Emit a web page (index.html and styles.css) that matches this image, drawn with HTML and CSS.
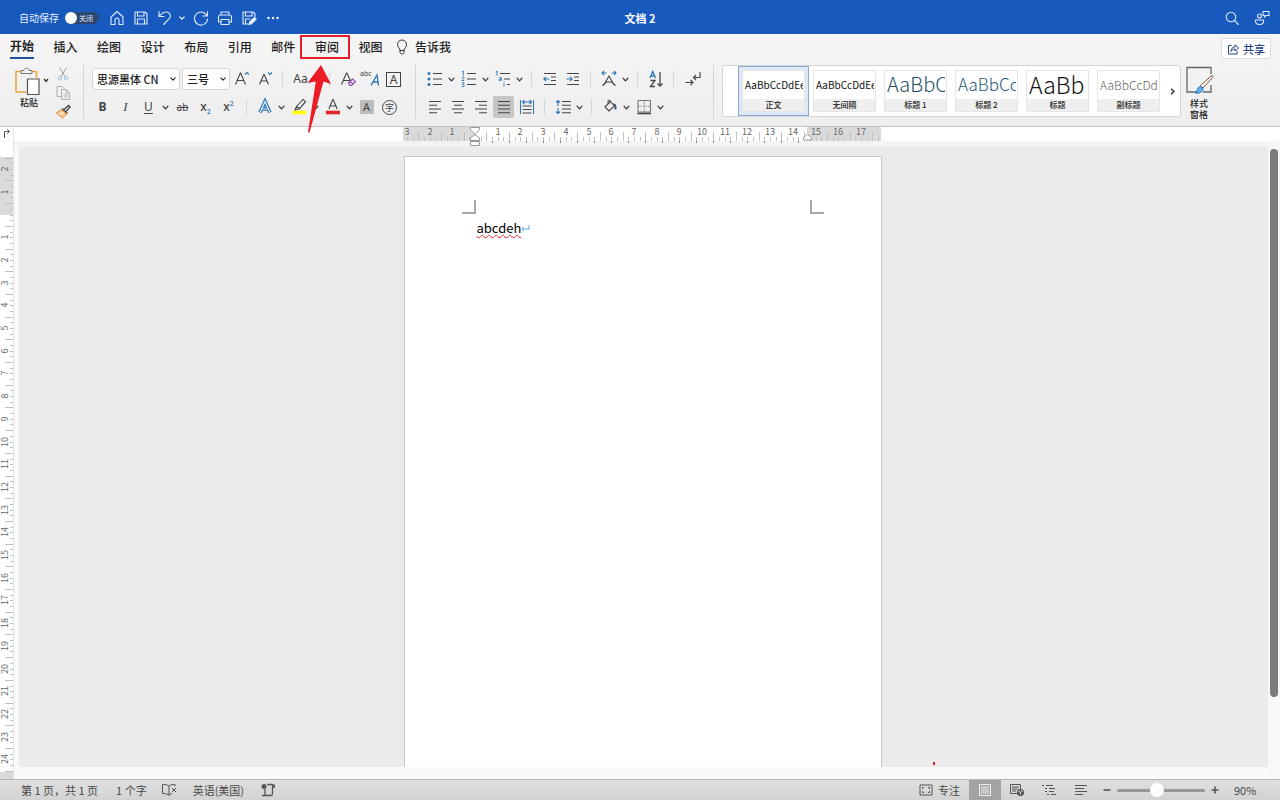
FILE: index.html
```html
<!DOCTYPE html>
<html lang="zh-CN">
<head>
<meta charset="utf-8">
<title>文档2</title>
<link rel="stylesheet" href="styles.css">
</head>
<body>
<svg class="defs" aria-hidden="true">
  <symbol id="chev" viewBox="0 0 8 8"><path d="M1.800 2.800 4 5.200 6.200 2.800" fill="none" stroke="currentColor" stroke-width="1.100" stroke-linecap="round" stroke-linejoin="round"/></symbol>
</svg>

<header class="titlebar">
  <div class="quick">
    <label class="autosave">自动保存 <span class="switch"><input type="checkbox"><span class="switch-text">关闭</span></span></label>
    <button class="qbtn" aria-label="主页"><svg viewBox="0 0 16 16"><path d="M2 7 8 1.500 14 7v7.500H10V10a2 2 0 0 0-4 0v4.500H2z"/></svg></button>
    <button class="qbtn" aria-label="保存"><svg viewBox="0 0 16 16"><path d="M2 2h10l2 2v10H2zM4.500 2v4h6.500V2M4.500 14V9h7v5"/></svg></button>
    <button class="qbtn" aria-label="撤消"><svg viewBox="0 0 16 16"><path d="M2 1.500v5h5M2.300 6.200C5 3 8 1.500 10.500 2.200c3 .8 3.700 4.300 1.800 6.500L6.500 14.500"/></svg></button>
    <button class="qchev" aria-label="撤消选项"><svg viewBox="0 0 8 8"><use href="#chev"/></svg></button>
    <button class="qbtn" aria-label="重复"><svg viewBox="0 0 16 16"><path d="M14.500 1.500v4.500H10M14 6A6.500 6.500 0 1 0 14.500 9"/></svg></button>
    <button class="qbtn" aria-label="打印"><svg viewBox="0 0 16 16"><path d="M4 5V2h8v3M4 12H1.500V7c0-1.200.8-2 2-2h9c1.200 0 2 .8 2 2v5H12M4 9.500h8v5H4z"/></svg></button>
    <button class="qbtn" aria-label="另存为"><svg viewBox="0 0 16 16"><path d="M7 14H2V2h10l2 2v2.500M4.500 2v4h6.500V2M4.500 14V9h4.500"/><path d="m8 14.500.8-2.500L13.500 7.500l1.700 1.700-4.700 4.500z" fill="#fff"/></svg></button>
    <button class="qbtn" aria-label="更多"><svg viewBox="0 0 16 16"><g fill="#fff" stroke="none"><circle cx="3.500" cy="8" r="1.200"/><circle cx="8" cy="8" r="1.200"/><circle cx="12.500" cy="8" r="1.200"/></g></svg></button>
  </div>
  <h1 class="doc-title">文档 2</h1>
  <div class="title-right">
    <button class="qbtn" aria-label="搜索"><svg viewBox="0 0 16 16"><circle cx="7" cy="7" r="4.800"/><path d="m10.500 10.500 4 4"/></svg></button>
    <button class="qbtn" aria-label="反馈"><svg viewBox="0 0 16 16"><circle cx="5.500" cy="6" r="2"/><path d="M1.500 10h8v1.500c0 4-8 4-8 0zM9 1.500h6v4h-3l-1.500 1.700V5.500H9z"/></svg></button>
  </div>
</header>

<nav class="tabs">
  <div class="tab-list">
    <button class="tab active">开始</button>
    <button class="tab">插入</button>
    <button class="tab">绘图</button>
    <button class="tab">设计</button>
    <button class="tab">布局</button>
    <button class="tab">引用</button>
    <button class="tab">邮件</button>
    <button class="tab marked">审阅<svg class="arrow" viewBox="0 0 30 70" aria-hidden="true"><path d="M16 1 26 20 18.500 17.500 4.500 68.500H3L10.800 17.500 2.500 19z"/></svg></button>
    <button class="tab">视图</button>
  </div>
  <button class="tell"><svg viewBox="0 0 12 16"><path d="M4 11.500C4 9 1.500 8.500 1.500 5.500a4.500 4.500 0 0 1 9 0C10.500 8.500 8 9 8 11.500zM4 11.500v2c0 2 4 2 4 0v-2"/></svg>告诉我</button>
  <button class="share"><svg viewBox="0 0 12 12"><path d="M4.500 2.500h-3v8.500h8.500V8M4 8.500c0-3 1.500-4.500 4-4.500V1.800L11.500 5 8 8V6C6 6 5 6.800 4 8.500z"/></svg>共享</button>
</nav>

<section class="ribbon">
  <div class="clipboard">
    <button class="paste">
      <svg viewBox="0 0 38 30"><path d="M7 4.500H2v20.500h10M18 4.500h4.500V11" fill="none" stroke="#e8a33d" stroke-width="1.500"/><path d="M7 6.500v-3h3c0-3 5-3 5 0h3v3z" fill="#f7f7f7" stroke="#777"/><path d="M13.500 12h11.500v15.500H13.500z" fill="#fff" stroke="#555" stroke-width="1.200"/><path d="m30 12 2 2.500 2-2.500" fill="none" stroke="#333" stroke-width="1.300"/></svg>
      <span>粘贴</span>
    </button>
    <div class="clip-col">
      <button aria-label="剪切"><svg viewBox="0 0 16 16"><path d="m4.500 1.500 5.700 9.500M11.500 1.500 5.800 11" stroke="#aaa"/><g stroke="#8fbbe0"><circle cx="4.800" cy="12.300" r="1.700"/><circle cx="11.200" cy="12.300" r="1.700"/></g></svg></button>
      <button aria-label="复制"><svg viewBox="0 0 16 16"><path d="M6 11.500H2V1.500h5l2 2M6.500 4.500h5l3 3v7h-8zM11 4.500v3.500h3.500M8.500 10h4M8.500 12h4" stroke="#b0b0b0"/></svg></button>
      <button aria-label="格式刷"><svg viewBox="0 0 16 16"><path d="m9 5.500 4.500-4 1.500 1.500-4 4.500M7 4.500l5.500 5" stroke="#444" stroke-width="1.300"/><path d="M6.500 5.500 1.500 9l6 5 4-4z" fill="#f5c98c" stroke="#d98a29"/><path d="m4 10.500 4.500-2" stroke="#fff"/></svg></button>
    </div>
  </div>
  <div class="vline"></div>

  <div class="group">
    <div class="row">
      <label class="combo font-name"><select aria-label="字体"><option>思源黑体 CN</option></select><svg viewBox="0 0 8 8"><use href="#chev"/></svg></label>
      <label class="combo font-size"><select aria-label="字号"><option>三号</option></select><svg viewBox="0 0 8 8"><use href="#chev"/></svg></label>
      <button class="ib" aria-label="增大字号"><svg viewBox="0 0 20 20"><path d="M3.500 15.500 8.300 4h.4l4.800 11.500M5.300 11.500h6.400"/><path d="m13 5.500 2-2 2 2" stroke="#2e75b6"/></svg></button>
      <button class="ib" aria-label="减小字号"><svg viewBox="0 0 20 20"><path d="M4.500 15.500 8.800 5.500h.4l4.300 10M6.200 12h5.600"/><path d="m13 3.500 2 2 2-2" stroke="#2e75b6"/></svg></button>
      <i class="sep"></i>
      <button class="ib" aria-label="更改大小写"><span class="g g-case">Aa</span></button>
      <button class="ch" aria-label="大小写选项"><svg viewBox="0 0 8 8"><use href="#chev"/></svg></button>
      <i class="sep"></i>
      <button class="ib" aria-label="清除格式"><svg viewBox="0 0 20 20"><path d="M3.500 15.500 8.500 4h.4L13 13M5.300 11.500h6.400"/><path d="m10.500 14 4-4 3 2.500-4 4h-1.500z" stroke="#8e44a8" fill="#f6eaf8"/><path d="m12 12.500 3 2.500" stroke="#8e44a8"/></svg></button>
      <button class="ib phon" aria-label="拼音指南"><span class="g g-abc">abc</span><svg viewBox="0 0 20 20"><path d="m10 16.500 6-10.500 1.500 10.500M12.500 13h4.500" stroke="#2e75b6" stroke-width="1.300"/></svg></button>
      <button class="ib" aria-label="字符边框"><span class="g g-box">A</span></button>
    </div>
    <div class="row">
      <button class="ib" aria-label="加粗"><span class="g g-b">B</span></button>
      <button class="ib" aria-label="倾斜"><span class="g g-i">I</span></button>
      <button class="ib" aria-label="下划线"><span class="g g-u">U</span></button>
      <button class="ch" aria-label="下划线选项"><svg viewBox="0 0 8 8"><use href="#chev"/></svg></button>
      <button class="ib" aria-label="删除线"><span class="g g-s">ab</span></button>
      <button class="ib" aria-label="下标"><span class="g g-x">x<sub>2</sub></span></button>
      <button class="ib" aria-label="上标"><span class="g g-x">x<sup>2</sup></span></button>
      <i class="sep"></i>
      <button class="ib" aria-label="文本效果"><svg viewBox="0 0 20 20"><path d="M5 15.500 10 4.500l5 11M7.200 12h5.600" stroke="#2e75b6" stroke-width="3.600"/><path d="M5 15.500 10 4.500l5 11M7.200 12h5.600" stroke="#e6f1fa" stroke-width="1.200"/></svg></button>
      <button class="ch" aria-label="文本效果选项"><svg viewBox="0 0 8 8"><use href="#chev"/></svg></button>
      <button class="ib" aria-label="突出显示"><svg viewBox="0 0 20 20"><path d="M7.500 9.500 14 2.500l2.500 2.200-6 7zM7.500 9.500 6 13l4.500-1.300"/><path d="M3.500 15.500h13.500" stroke="#ffff00" stroke-width="3.600"/></svg></button>
      <button class="ch" aria-label="突出显示选项"><svg viewBox="0 0 8 8"><use href="#chev"/></svg></button>
      <button class="ib" aria-label="字体颜色"><svg viewBox="0 0 20 20"><path d="M5.800 12 9.800 2.500h.4l4 9.500M7.300 9h5.400"/><path d="M3 15.500h14" stroke="#e3242b" stroke-width="3.600"/></svg></button>
      <button class="ch" aria-label="字体颜色选项"><svg viewBox="0 0 8 8"><use href="#chev"/></svg></button>
      <button class="ib" aria-label="字符底纹"><span class="g g-shade">A</span></button>
      <button class="ib" aria-label="带圈字符"><span class="g g-circle">字</span></button>
    </div>
  </div>
  <div class="vline"></div>

  <div class="group">
    <div class="row">
      <button class="ib" aria-label="项目符号"><svg viewBox="0 0 20 20"><path d="M8 4.500h9M8 10h9M8 15.500h9"/><g fill="#2e75b6" stroke="none"><circle cx="4" cy="4.500" r="1.500"/><circle cx="4" cy="10" r="1.500"/><circle cx="4" cy="15.500" r="1.500"/></g></svg></button>
      <button class="ch" aria-label="项目符号选项"><svg viewBox="0 0 8 8"><use href="#chev"/></svg></button>
      <button class="ib" aria-label="编号"><svg viewBox="0 0 20 20"><path d="M8 4.500h9M8 10h9M8 15.500h9"/><path class="digits" d="M3 3 4.200 2v4.500M2.800 8.500c1-1 2.400-.5 2.200.6-.2.900-1.400 1.500-2.200 2.400H5.200M2.800 14c1-.8 2.200-.4 2.200.5 0 .7-.6 1-1.400 1 .9 0 1.600.4 1.600 1.200 0 1-1.600 1.300-2.500.5"/></svg></button>
      <button class="ch" aria-label="编号选项"><svg viewBox="0 0 8 8"><use href="#chev"/></svg></button>
      <button class="ib" aria-label="多级列表"><svg viewBox="0 0 20 20"><path d="M7 4.500h10M11 10h6M14 15.500h3"/><path class="digits" d="M2.800 3 4 2v4.500M6 8.700c1-.6 2.300-.4 2.300.6v2.200M8.300 10c-1.500 0-2.500.2-2.500.9 0 .9 1.700.9 2.500 0M11 14.300v3.200M11 12.500v.8"/></svg></button>
      <button class="ch" aria-label="多级列表选项"><svg viewBox="0 0 8 8"><use href="#chev"/></svg></button>
      <i class="sep"></i>
      <button class="ib" aria-label="减少缩进"><svg viewBox="0 0 20 20"><path d="M4 4.500h12M11 8h5M11 11.500h5M4 15.500h12"/><path d="M9.500 10H4M6 7.800 3.800 10 6 12.200" stroke="#2e75b6"/></svg></button>
      <button class="ib" aria-label="增加缩进"><svg viewBox="0 0 20 20"><path d="M4 4.500h12M11 8h5M11 11.500h5M4 15.500h12"/><path d="M3.500 10H9M7 7.800 9.200 10 7 12.200" stroke="#2e75b6"/></svg></button>
      <i class="sep"></i>
      <button class="ib" aria-label="中文版式"><svg viewBox="0 0 20 20"><path d="M4.500 16.500 10 7l5.500 9.500M3.500 16.500 8 12.500M16.500 16.500 12 12.500M7 13h6"/><path d="M7.500 4H3M5 2 3 4l2 2M12.500 4H17M15 2l2 2-2 2" stroke="#2e75b6"/></svg></button>
      <button class="ch" aria-label="中文版式选项"><svg viewBox="0 0 8 8"><use href="#chev"/></svg></button>
      <i class="sep"></i>
      <button class="ib" aria-label="排序"><svg viewBox="0 0 20 20"><path d="m4 9 2.700-6.500L9.500 9M5 7h3.500" stroke="#2e75b6" stroke-width="1.300"/><path d="M4.500 11.500H9l-4.500 6H9M14 3v14M11.500 14.500 14 17l2.500-2.500" stroke-width="1.300"/></svg></button>
      <i class="sep"></i>
      <button class="ib" aria-label="显示编辑标记"><svg viewBox="0 0 20 20"><path d="M18 3v5.500h-6.500M14 6l-2.500 2.500L14 11M3.500 13.500H11M8.500 11l2.500 2.500L8.500 16"/></svg></button>
    </div>
    <div class="row">
      <button class="ib" aria-label="左对齐"><svg viewBox="0 0 20 20"><path d="M4 4.500h12M4 8.300h8M4 12h12M4 15.700h8"/></svg></button>
      <button class="ib" aria-label="居中"><svg viewBox="0 0 20 20"><path d="M4 4.500h12M6 8.300h8M4 12h12M6 15.700h8"/></svg></button>
      <button class="ib" aria-label="右对齐"><svg viewBox="0 0 20 20"><path d="M4 4.500h12M8 8.300h8M4 12h12M8 15.700h8"/></svg></button>
      <button class="ib on" aria-label="两端对齐" aria-pressed="true"><svg viewBox="0 0 20 20"><path d="M4 4.500h12M4 8.300h12M4 12h12M4 15.700h12"/></svg></button>
      <button class="ib" aria-label="分散对齐"><svg viewBox="0 0 20 20"><path d="M5.500 9h9M5.500 12.500h9M5.500 16h9"/><path d="M3.500 3v14M16.500 3v14M5.500 5h9M7.500 3l-2 2 2 2M12.500 3l2 2-2 2" stroke="#2e75b6"/></svg></button>
      <i class="sep"></i>
      <button class="ib" aria-label="行距"><svg viewBox="0 0 20 20"><path d="M9 4.500h9M9 8.300h9M9 12h9M9 15.700h9"/><path d="M5 3.500V9M5 11v5.500M3 5.500l2-2 2 2M3 14.500l2 2 2-2" stroke="#2e75b6"/></svg></button>
      <button class="ch" aria-label="行距选项"><svg viewBox="0 0 8 8"><use href="#chev"/></svg></button>
      <i class="sep"></i>
      <button class="ib" aria-label="底纹"><svg viewBox="0 0 20 20"><path d="m5 10 5.500-5.500 4 4.500-5.500 5zM8 7V4.500c0-1.500 2.500-1.500 2.500 0"/><path d="M13.500 7c2 .5 2.300 3 2 5.500" stroke="#2f4b7c" stroke-width="1.800"/></svg></button>
      <button class="ch" aria-label="底纹选项"><svg viewBox="0 0 8 8"><use href="#chev"/></svg></button>
      <button class="ib" aria-label="边框"><svg viewBox="0 0 20 20"><path d="M4 3.500h12.500V15H4z" stroke="#777"/><path d="M10.300 3.500V15M4 9.300h12.500" stroke="#888" stroke-dasharray="1.500 1"/><path d="M3.500 16.500H17" stroke-width="1.600"/></svg></button>
      <button class="ch" aria-label="边框选项"><svg viewBox="0 0 8 8"><use href="#chev"/></svg></button>
    </div>
  </div>
  <div class="vline"></div>

  <div class="gallery">
    <button class="card selected"><span class="sample s-body">AaBbCcDdEe</span><span class="name">正文</span></button>
    <button class="card"><span class="sample s-body">AaBbCcDdEe</span><span class="name">无间隔</span></button>
    <button class="card"><span class="sample s-h1">AaBbC</span><span class="name">标题 1</span></button>
    <button class="card"><span class="sample s-h2">AaBbCc</span><span class="name">标题 2</span></button>
    <button class="card"><span class="sample s-title">AaBb</span><span class="name">标题</span></button>
    <button class="card"><span class="sample s-sub">AaBbCcDd</span><span class="name">副标题</span></button>
    <button class="more" aria-label="更多样式"><svg viewBox="0 0 8 8"><path d="m2.800 1.500 2.500 2.500-2.500 2.500"/></svg></button>
  </div>
  <button class="pane">
    <svg viewBox="0 0 30 30"><path d="M12 27H3V2.500h24V9M27 20v7h-8" fill="none" stroke="#666" stroke-width="1.300"/><path d="M16.500 20.500 27 11c1.500-1 2.500 0 1.500 1.500L19 23z" fill="#fff" stroke="#8a4b3a"/><path d="M11 28c2-1 2-3 3-5 1.500-2.500 5-1.500 5 1 0 3-4 5-8 4z" fill="#5fb2ee" stroke="#2e75b6"/></svg>
    <span>样式<br>窗格</span>
  </button>
</section>

<main class="work">
  <div class="corner"><svg viewBox="0 0 14 14"><path d="M4.500 11V4.500H9M7.200 2.300 9.500 4.500 7.200 6.700"/></svg></div>
  <div class="hruler"><svg id="hruler" width="478" height="20"></svg></div>
  <div class="vruler"><svg id="vruler" width="14" height="637"></svg></div>
  <div class="canvas">
    <article class="page">
      <i class="crop crop-l"></i><i class="crop crop-r"></i>
      <p><span class="typo">abcdeh</span><svg class="ret" viewBox="0 0 9 8"><path d="M8 1v4H1M3 3 1 5l2 2"/></svg></p>
    </article>
    <i class="speck"></i>
  </div>
  <div class="scroll"><div class="thumb"></div></div>
</main>

<footer class="status">
  <span class="pages">第 1 页，共 1 页</span>
  <span class="words">1 个字</span>
  <button class="sb" aria-label="拼写检查"><svg viewBox="0 0 16 14"><path d="M8 3C7 2 5 1.500 1.500 1.500v9C5 10.500 7 11 8 12.500c.5-1 1.500-1.600 3-2M8 3v9.500M8 3c1-1 2.500-1.500 6-1.500v2M11 5l4 4M15 5l-4 4"/></svg></button>
  <span class="lang">英语(美国)</span>
  <button class="sb" aria-label="宏"><svg viewBox="0 0 16 14"><path d="M5 6v6.500h6c1 0 1.500-.8 1.500-2V3c0-1.500 2-1.500 2 0v1h-2M7 1.500h6M2 12.500h8" stroke-width="1.300"/><circle cx="4" cy="3.500" r="2.500" fill="#555" stroke="none"/></svg></button>
  <div class="status-right">
    <button class="focus"><svg viewBox="0 0 16 14"><path d="M2 2h12v10H2z"/><path d="M4.500 6V4.500H6M10 4.500h1.500V6M11.500 8v1.500H10M6 9.500H4.500V8"/></svg>专注</button>
    <button class="view on" aria-label="页面视图"><svg viewBox="0 0 16 14"><path d="M2.500 1.500h11v11h-11zM4 4h8M4 6h8M4 8h8M4 10h8"/></svg></button>
    <button class="view" aria-label="Web 版式"><svg viewBox="0 0 16 14"><path d="M1.500 1.500h10v9h-10zM3 4h7M3 6h6M3 8h4" /><circle cx="11.500" cy="9.500" r="3.500" fill="#555" stroke="none"/><path d="m9.500 8.500 2 .5v2.500M12 7l1.500 2" stroke="#ddd"/></svg></button>
    <button class="view" aria-label="大纲"><svg viewBox="0 0 16 14"><path d="M1 2.500h2M5 2.500h7M4 5.500h2M8 5.500h6M4 8.500h2M8 8.500h5M6 11.500h2M10 11.500h5"/></svg></button>
    <button class="view" aria-label="草稿"><svg viewBox="0 0 16 14"><path d="M2 2.500h12M2 5.500h9M2 8.500h12M2 11.500h8"/></svg></button>
    <button class="zoom" aria-label="缩小"><svg viewBox="0 0 8 8"><path d="M0.500 4h7"/></svg></button>
    <input class="slider" type="range" min="0" max="100" value="45" aria-label="缩放">
    <button class="zoom" aria-label="放大"><svg viewBox="0 0 8 8"><path d="M0.500 4h7M4 .5v7"/></svg></button>
    <span class="pct">90%</span>
  </div>
</footer>
<script src="rulers.js"></script>
</body>
</html>
```

FILE: styles.css
```css
*, *::before { box-sizing: border-box; }
body {
  margin: 0;
  height: 100vh;
  display: flex;
  flex-direction: column;
  overflow: hidden;
  font-family: "Noto Sans CJK SC", "Noto Sans", sans-serif;
  font-size: 11px;
  color: #222;
  background: #f9f9f9;
}
button {
  margin: 0;
  padding: 0;
  border: 0;
  background: none;
  font: inherit;
  color: inherit;
}
svg { display: block; }
.defs { position: absolute; width: 0; height: 0; }

/* Title bar */
.titlebar {
  flex: none;
  height: 34px;
  display: grid;
  grid-template-columns: 1fr auto 1fr;
  align-items: center;
  background: #1859bd;
  color: #fff;
  padding: 1px 10px 0 19px;
}
.quick, .title-right { display: flex; align-items: center; gap: 8px; }
.title-right { justify-content: flex-end; gap: 14px; }
.autosave { display: flex; align-items: center; gap: 6px; font-size: 10px; color: #e4edfa; margin-right: 2px; }
.switch {
  display: flex;
  align-items: center;
  width: 34px;
  height: 12px;
  border-radius: 6px;
  background: #2c4770;
}
.switch input {
  appearance: none;
  flex: none;
  margin: 0;
  width: 12px;
  height: 12px;
  border-radius: 50%;
  background: #fff;
}
.switch-text { font-size: 7px; margin-left: 2px; line-height: 12px; }
.qbtn svg {
  width: 16px;
  height: 16px;
  fill: none;
  stroke: #dfeafb;
  stroke-width: 1.1;
  stroke-linejoin: round;
  stroke-linecap: round;
}
.qchev { margin-left: -3px; margin-right: -1px; }
.qchev svg { width: 8px; height: 8px; }
.doc-title { margin: 0; font-size: 11px; font-weight: 700; line-height: 16px; padding-right: 9px; }

/* Tabs */
.tabs {
  flex: none;
  height: 28px;
  display: flex;
  align-items: flex-start;
  padding: 0 9px 0 10px;
  background: #f4f4f4;
}
.tab-list { display: grid; grid-template-columns: repeat(9, 1fr); width: 392px; }
.tab {
  position: relative;
  justify-self: start;
  height: 25px;
  font-size: 12px;
  font-weight: 500;
  line-height: 23px;
  text-align: left;
  white-space: nowrap;
}
.tab.active { font-weight: 700; border-bottom: 2px solid #24509a; }
.tab.marked::before {
  content: "";
  position: absolute;
  left: -15px;
  top: 1px;
  width: 50px;
  height: 24px;
  border: 2px solid #e3202a;
}
.arrow {
  position: absolute;
  z-index: 5;
  left: -10px;
  top: 30px;
  width: 30px;
  height: 70px;
  fill: #ec1c24;
}
.tell { display: flex; align-items: center; gap: 7px; height: 25px; font-size: 12px; font-weight: 500; margin-left: -6px; }
.tell svg { width: 12px; height: 16px; fill: none; stroke: #333; }
.share {
  margin: 4px 0 0 auto;
  width: 50px;
  height: 21px;
  display: flex;
  align-items: center;
  justify-content: center;
  gap: 4px;
  border: 1px solid #dcdcdc;
  border-radius: 3px;
  background: #fff;
  color: #24427e;
  font-weight: 500;
}
.share svg { width: 12px; height: 12px; fill: none; stroke: #24427e; stroke-width: 1; }

/* Ribbon */
.ribbon {
  flex: none;
  height: 65px;
  display: flex;
  align-items: flex-start;
  padding: 3px 0 0 14px;
  background: linear-gradient(#f3f3f3, #eeeeee);
  border-bottom: 1px solid #c4c4c4;
}
.clipboard { display: flex; align-items: flex-start; gap: 3px; padding-right: 2px; }
.paste { width: 38px; font-size: 9px; line-height: 12px; text-align: left; padding-top: 2px; }
.paste svg { width: 38px; height: 30px; }
.paste span { display: block; margin-left: 6px; font-weight: 500; }
.clip-col { display: flex; flex-direction: column; gap: 3px; padding-top: 1px; }
.clip-col svg { width: 16px; height: 16px; fill: none; }
.vline { flex: none; width: 1px; height: 54px; background: #d4d4d4; margin: 0 7px 0 10px; }
.group { display: flex; flex-direction: column; gap: 6px; padding-top: 3px; }
.row { display: flex; align-items: center; height: 22px; }
.combo { position: relative; display: block; }
.combo select {
  appearance: none;
  display: block;
  width: 100%;
  height: 22px;
  margin: 0;
  padding: 0 0 0 4px;
  border: 1px solid #d6d6d6;
  border-radius: 3px;
  background: #fff;
  font: inherit;
  font-size: 11px;
  font-weight: 500;
  color: #222;
}
.combo svg { position: absolute; right: 3px; top: 7px; width: 8px; height: 8px; pointer-events: none; }
.font-name { width: 88px; margin: 0 2px 0 1px; }
.font-size { width: 48px; }
.ib {
  flex: none;
  position: relative;
  width: 23px;
  height: 22px;
  display: flex;
  align-items: center;
  justify-content: center;
}
.ib > svg {
  flex: none;
  width: 20px;
  height: 20px;
  fill: none;
  stroke: #444;
  stroke-width: 1.1;
}
.ib.on::before { content: ""; position: absolute; inset: 0 1px; border-radius: 2px; background: #c6c6c6; }
.ib.on svg { position: relative; }
.ch { flex: none; width: 11px; height: 22px; }
.ch svg { width: 9px; height: 9px; margin: 0 auto; color: #333; }
.sep { flex: none; width: 1px; height: 16px; margin: 0 6px; background: #d6d6d6; }
.ib .digits { stroke: #2e75b6; stroke-width: 1; }
.g { font-family: "Noto Sans", sans-serif; color: #444; line-height: 16px; }
.g-case { font-size: 12px; }
.g-abc { position: absolute; left: 1px; top: 0; font-size: 7px; line-height: 12px; }
.g-box { width: 15px; height: 15px; border: 1px solid #444; font-size: 12px; line-height: 13px; text-align: center; }
.g-b { font-size: 12px; font-weight: 700; }
.g-i { font-size: 13px; font-style: italic; font-family: "Liberation Serif", serif; }
.g-u { font-size: 12px; text-decoration: underline; text-underline-offset: 2px; }
.g-s { font-size: 10px; text-decoration: line-through; }
.g-x { font-size: 12px; font-weight: 500; }
.g-x sub, .g-x sup { font-size: 7px; color: #2e75b6; line-height: 0; }
.g-shade { width: 14px; height: 14px; background: #bdbdbd; font-size: 11px; line-height: 14px; text-align: center; }
.g-circle { width: 15px; height: 15px; border: 1px solid #444; border-radius: 50%; font-family: "Noto Sans CJK SC", sans-serif; font-size: 9px; line-height: 13px; text-align: center; }

/* Style gallery */
.gallery {
  display: flex;
  align-items: center;
  height: 52px;
  gap: 8px;
  padding: 0 3px 0 19px;
  margin-left: 1px;
  border: 1px solid #d4d4d4;
  border-radius: 3px;
  background: #fff;
}
.card {
  flex: none;
  width: 63px;
  height: 42px;
  display: flex;
  flex-direction: column;
  border: 1px solid #e6e6e6;
  background: #fff;
}
.card.selected { outline: 3px solid #dfe8f5; box-shadow: 0 0 0 4px #8aa8d4; }
.sample {
  height: 28px;
  line-height: 28px;
  padding-left: 2px;
  margin-right: 1px;
  overflow: hidden;
  white-space: nowrap;
  text-align: left;
  color: #111;
}
.name { flex: 1; background: #efefef; font-size: 8px; line-height: 12px; font-weight: 500; text-align: center; }
.s-body { font-size: 10px; }
.s-h1 { font-size: 20px; font-weight: 300; line-height: 26px; color: #1f5068; }
.s-h2 { font-size: 17px; font-weight: 300; line-height: 26px; color: #1f5a78; }
.s-title { font-size: 23px; font-weight: 300; line-height: 26px; }
.s-sub { font-size: 12px; font-weight: 300; color: #666; }
.more svg { width: 9px; height: 9px; fill: none; stroke: #333; stroke-width: 1.3; }
.pane { margin-left: 3px; font-size: 9px; line-height: 11px; font-weight: 500; display: flex; flex-direction: column; align-items: center; }
.pane svg { width: 30px; height: 30px; margin-bottom: 3px; }

/* Work area */
.work {
  flex: 1;
  min-height: 0;
  display: grid;
  grid-template-columns: 14px 1fr 12px;
  grid-template-rows: 20px 1fr;
}
.corner { background: #fff; height: 14px; border-right: 1px solid #e4e4e4; }
.corner svg { width: 14px; height: 14px; fill: none; stroke: #555; }
.hruler {
  display: flex;
  justify-content: center;
  background: linear-gradient(#fff 14px, #f3f3f3 14px);
  padding-left: 1px;
}
.vruler { margin-top: -5px; overflow: hidden; background: #fff; border-right: 1px solid #e4e4e4; }
.canvas {
  position: relative;
  margin: 0 0 12px 5px;
  padding: 9px 2px 0 0;
  display: flex;
  justify-content: center;
  background: #ebebeb;
  overflow: hidden;
}
.page {
  position: relative;
  width: 478px;
  padding: 61px 72px 0;
  background: #fff;
  border: 1px solid #c9c9c9;
  border-bottom: 0;
}
.page p { margin: 0; display: flex; align-items: center; font-size: 13px; line-height: 20px; color: #000; }
.typo { text-decoration: underline wavy #d9232b 1px; text-underline-offset: 1px; }
.ret { width: 9px; height: 8px; fill: none; stroke: #5aa9e6; }
.crop { position: absolute; top: 43px; width: 14px; height: 14px; border-bottom: 2px solid #a8a8a8; }
.crop-l { left: 57px; border-right: 2px solid #a8a8a8; }
.crop-r { right: 57px; border-left: 2px solid #a8a8a8; }
.speck { position: absolute; left: 914px; bottom: 2px; width: 2px; height: 3px; background: #d2232a; }
.scroll { grid-column: 3; grid-row: 1 / 3; padding: 22px 2px 82px 2px; background: linear-gradient(#fff 14px, #f8f8f8 14px); }
.thumb { width: 8px; height: 100%; border-radius: 4px; background: #7c7c7c; }
.tick { stroke: #c0c0c0; stroke-width: 1; shape-rendering: crispEdges; }
.tab-stop { stroke: #888; stroke-width: 1; shape-rendering: crispEdges; }
.shade { fill: #dadada; }
.num { font-size: 9px; fill: #666; text-anchor: middle; }
.handle { fill: #fff; stroke: #999; }

/* Status bar */
.status {
  flex: none;
  height: 21px;
  display: flex;
  align-items: center;
  padding-left: 21px;
  color: #484848;
  background: linear-gradient(#e0e0e0, #d2d2d2);
  border-top: 1px solid #b4b4b4;
}
.status svg { width: 16px; height: 14px; fill: none; stroke: #555; }
.status .pages { margin-right: 18px; }
.status .words { margin-right: 14px; }
.status .lang { margin: 0 16px; }
.status-right { margin-left: auto; display: flex; align-items: center; height: 100%; padding-right: 22px; }
.focus { display: flex; align-items: center; gap: 4px; margin-right: 9px; }
.view { width: 32px; height: 100%; display: flex; align-items: center; justify-content: center; }
.view.on { background: #a3a3a3; }
.view.on svg { stroke: #eee; }
.zoom { width: 8px; margin: 0 6px; }
.status .zoom svg { width: 8px; height: 8px; stroke-width: 1.6; }
.slider { appearance: none; width: 88px; height: 14px; margin: 0; background: none; }
.slider::-webkit-slider-runnable-track { height: 3px; border-radius: 2px; background: #979797; }
.slider::-webkit-slider-thumb { appearance: none; width: 14px; height: 14px; margin-top: -6px; border-radius: 50%; background: #fff; }
.pct { margin-left: 9px; width: 24px; }
```

FILE: rulers.js
```js
const NS = "http://www.w3.org/2000/svg";
const UNIT = 22.7;

function add(svg, name, attrs, text) {
  const el = document.createElementNS(NS, name);
  for (const key in attrs) el.setAttribute(key, attrs[key]);
  if (text !== undefined) el.textContent = text;
  svg.appendChild(el);
}

function drawHorizontal() {
  const svg = document.getElementById("hruler");
  const zero = 72, end = 404, size = 478;
  add(svg, "rect", { class: "shade", x: 0, y: 0, width: zero, height: 14 });
  add(svg, "rect", { class: "shade", x: end, y: 0, width: size - end, height: 14 });
  for (let q = -12; q <= 71; q++) {
    const x = Math.round(zero + q * UNIT / 4);
    const half = Math.abs(q) % 4 === 2;
    add(svg, "path", { class: "tick", d: `M${x + 0.5} ${half ? 5 : 10}V14` });
    if (q % 4 === 0 && q !== 0) add(svg, "text", { class: "num", x, y: 8 }, Math.abs(q / 4));
  }
  for (let x = zero + 17; x < end; x += 17) add(svg, "path", { class: "tab-stop", d: `M${x + 0.5} 14v2` });
  add(svg, "path", { class: "handle", d: "M67.500 0.500h9v2L72 7.500 67.500 2.500z" });
  add(svg, "path", { class: "handle", d: "M72 7.500 76.500 11v2.500h-9V11zM67.500 14.500h9v4h-9z" });
  add(svg, "path", { class: "handle", d: "M404.500 7.500 408.500 10.500v2.500h-8v-2.500z" });
}

function drawVertical() {
  const svg = document.getElementById("vruler");
  const zero = 72.5;
  add(svg, "rect", { class: "shade", x: 0, y: 15, width: 14, height: 58 });
  add(svg, "rect", { class: "shade", x: 0, y: 630, width: 14, height: 7 });
  for (let q = -10; q <= 98; q++) {
    const y = Math.round(zero + q * UNIT / 4);
    const half = Math.abs(q) % 4 === 2;
    if (q % 4 === 0 && q !== 0) add(svg, "text", { class: "num", transform: `translate(8 ${y}) rotate(-90)` }, Math.abs(q / 4));
    add(svg, "path", { class: "tick", d: `M${half ? 5 : 10} ${y + 0.5}H14` });
  }
}

drawHorizontal();
drawVertical();
```
